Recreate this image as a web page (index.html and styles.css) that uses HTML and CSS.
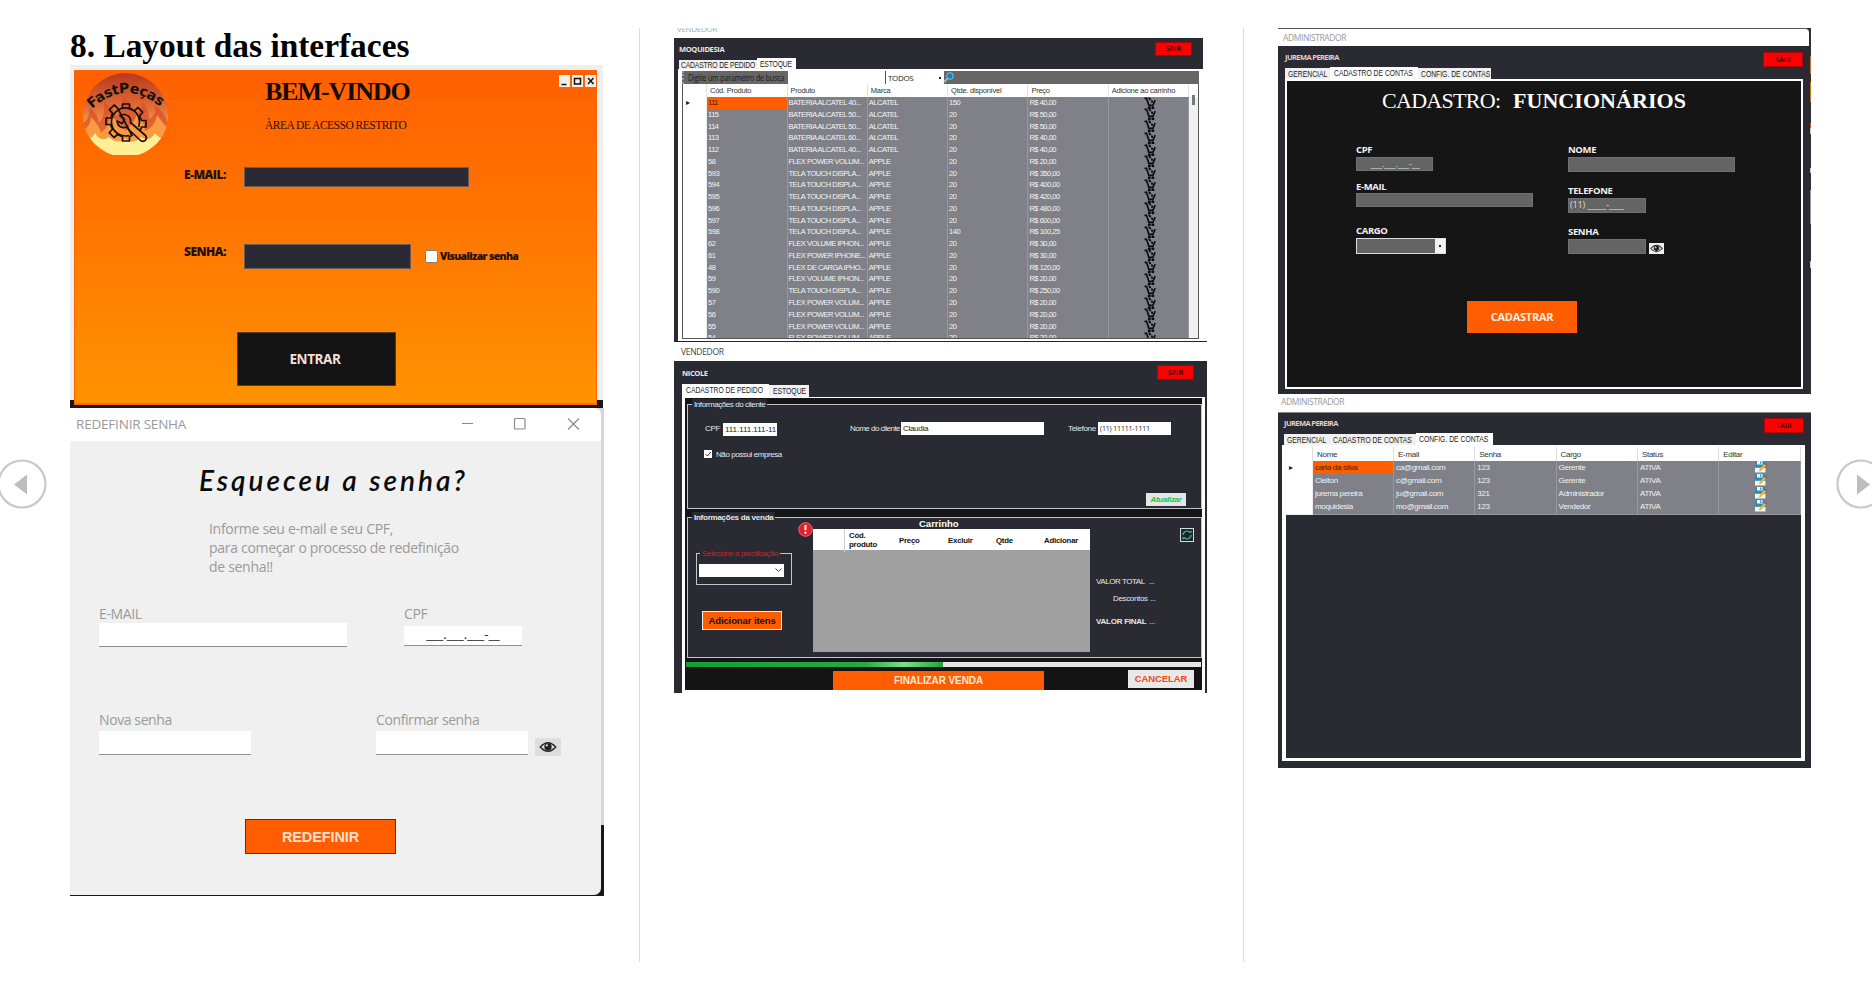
FILE: index.html
```html
<!DOCTYPE html>
<html lang="pt-BR">
<head>
<meta charset="utf-8">
<title>Layout das interfaces</title>
<link rel="stylesheet" href="styles.css">
</head>
<body>
<svg class="defs" width="0" height="0">
  <symbol id="cart" viewBox="0 0 12 13"><path d="M.3 1.4H2.400L4.800 8.700H9L11.400 3.200" fill="none" stroke="#0a0a0c" stroke-width="1.700"/><path d="M4 0l2.500 1 .8 2-2 .4zM7 3.400l2 .5.4 2-2 .2z" fill="#0a0a0c"/><circle cx="5.300" cy="11.300" r="1.600" fill="#0a0a0c"/><circle cx="9" cy="11.300" r="1.600" fill="#0a0a0c"/></symbol>
  <symbol id="eye" viewBox="0 0 20 14"><path d="M1 7Q10-3 19 7Q10 17 1 7Z" fill="none" stroke="#222" stroke-width="1.6"/><circle cx="10" cy="6.8" r="4.3" fill="#222"/><circle cx="8.7" cy="5.2" r="1.3" fill="#ddd"/></symbol>
  <symbol id="edit" viewBox="0 0 12 12"><path d="M0 0H9L10.500 2V11.500H0Z" fill="#2d8cb8"/><path d="M2 0H7.500V3.500H2Z" fill="#f4f8fa"/><path d="M5 .5H6.300V2.800H5Z" fill="#2d8cb8"/><path d="M0 6.800H10.500V11.500H0Z" fill="#f4f4f0"/><path d="M4.600 8.200l-.6 2.400 2.300-.8L11 4.400 9.200 2.800Z" fill="#edb63c"/><path d="M9.200 2.800l.9-1L12 3.400 11 4.400Z" fill="#c8402c"/></symbol>
</svg>
<main class="page">
  <section class="slide">
    <h1 class="heading">8. Layout das interfaces</h1>

    <div class="login-shot">
      <div class="login">
        <header class="login-head">
          <svg class="logo" width="85" height="82" viewBox="0 0 85 82">
            <defs>
              <linearGradient id="sky" x1="0" y1="0" x2="0" y2="1"><stop offset="0" stop-color="#b8381d"/><stop offset=".4" stop-color="#e06a36"/><stop offset=".7" stop-color="#f9a94e"/><stop offset="1" stop-color="#fff6a0"/></linearGradient>
              <clipPath id="disc"><path d="M0 42.500A42.500 42.500 0 0 1 85 42.500C85 62 72 76 55 82H30C13 76 0 62 0 42.500Z"/></clipPath>
              <path id="arc" d="M9 36Q43 4 80 36"/>
            </defs>
            <g clip-path="url(#disc)">
              <rect width="85" height="82" fill="url(#sky)"/>
              <path d="M0 50Q8 46 6 34Q15 40 16 50Q24 40 20 28Q32 36 33 44Q42 32 39 22Q50 32 52 42Q60 36 58 28Q66 34 66 46Q74 42 72 32Q82 40 85 50V82H0Z" fill="#dc4f2a" opacity=".75"/>
              <path d="M0 58Q8 52 8 44Q16 52 18 60Q28 52 26 42Q38 50 42 58Q52 50 54 40Q62 50 62 58Q72 54 74 42Q80 50 85 56V82H0Z" fill="#fa9a42"/>
              <path d="M0 66Q8 68 12 60Q18 70 26 64Q34 72 42 66Q50 72 58 64Q66 70 72 60Q78 68 85 64V82H0Z" fill="#ffef95"/>
            </g>
            <text class="logo-text"><textPath href="#arc" textLength="76">FastPeças</textPath></text>
            <g fill="none" stroke="#17110d" stroke-width="1.700" stroke-linejoin="round">
              <path d="M39.500 35.500V31h7v4.500l5 2.200 3.500-3.200 4.800 4.800-3.300 3.600 2 4.600H63v6.500h-4.500l-1 3M49 62.500l-2.500 1V68h-7v-4.300l-5-2.200-3.500 3-4.800-4.800 3.200-3.500-2-4.700H23v-6.500h4.500l2-4.700-3.200-3.500 4.800-4.800 3.500 3.200z"/>
              <path d="M55.500 54A14 14 0 1 0 46 62.500"/>
              <path d="M37 42.500l4.500 4-2.500 4-5-2.500c1 6 5 7.500 9 6l14.500 13.500c4 2.500 7.500-1.500 5-5L47.500 49.500c1-5.500-4-10-10.500-7z"/>
            </g>
          </svg>
          <div class="login-title">
            <h2>BEM-VINDO</h2>
            <p>ÀREA DE ACESSO RESTRITO</p>
          </div>
          <div class="classic-buttons">
            <svg viewBox="0 0 11 12"><path d="M2.500 9.500h5" /></svg>
            <svg viewBox="0 0 11 12"><path d="M2.500 3.500h6v5.500h-6z"/></svg>
            <svg viewBox="0 0 11 12"><path d="M3 3l5.500 6M8.500 3l-5.500 6"/></svg>
          </div>
        </header>
        <div class="login-row">
          <b>E-MAIL:</b><i class="dark-input"></i>
        </div>
        <div class="login-row login-row-pass">
          <b>SENHA:</b><i class="dark-input"></i><i class="box"></i><b class="small">Visualizar senha</b>
        </div>
        <div class="login-button">ENTRAR</div>
      </div>
    </div>

    <div class="reset-shot">
      <div class="reset">
        <header class="reset-bar">
          <span>REDEFINIR SENHA</span>
          <svg width="120" height="14" viewBox="0 0 120 14" fill="none" stroke="#8a8a8a" stroke-width="1.200"><path d="M1 6.500h11"/><rect x="53.500" y="1.500" width="10.500" height="10.500" rx="1"/><path d="M107 1.500l11 11M118 1.500l-11 11"/></svg>
        </header>
        <h2 class="script">Esqueceu a senha?</h2>
        <p class="reset-text">Informe seu e-mail e seu CPF,<br>para começar o processo de redefinição<br>de senha!!</p>
        <div class="reset-row reset-top">
          <label>E-MAIL<i class="white-input"></i></label>
          <label class="cpf">CPF<i class="white-input">___.___.___-__</i></label>
        </div>
        <div class="reset-row reset-bottom">
          <label>Nova senha<i class="white-input"></i></label>
          <label>Confirmar senha<i class="white-input"></i></label>
          <span class="eye-btn"><svg width="18" height="12"><use href="#eye"/></svg></span>
        </div>
        <div class="reset-button">REDEFINIR</div>
      </div>
    </div>
  </section>

  <section class="slide">
    <div class="cut-title"><span>VENDEDOR</span></div>
    <div class="stock">
      <header class="app-head stock-head"><b>MOQUIDESIA</b><span class="exit">SAIR</span></header>
      <nav class="tabs stock-tabs"><span><em>CADASTRO DE PEDIDO</em></span><span class="on"><em>ESTOQUE</em></span></nav>
      <div class="stock-panel">
        <div class="search"><span><em>Digite um parametro de busca</em></span><i></i><span class="all">TODOS<u></u></span>
          <svg width="12" height="11" viewBox="0 0 12 11"><path d="M1 10l4-4" stroke="#a3b7c2" stroke-width="2"/><circle cx="7" cy="4" r="3.300" fill="#1c7fb8" stroke="#79c9ea"/></svg></div>
        <div class="stock-table">
          <div class="tr th"><span></span><span>Cód. Produto</span><span>Produto</span><span>Marca</span><span>Qtde. disponível</span><span>Preço</span><span>Adicione ao carrinho</span></div>
          <div class="tr sel"><span>▸</span><span>111</span><span>BATERIA ALCATEL 40...</span><span>ALCATEL</span><span>150</span><span>R$ 40,00</span><span><svg><use href="#cart"/></svg></span></div>
          <div class="tr"><span></span><span>115</span><span>BATERIA ALCATEL 50...</span><span>ALCATEL</span><span>20</span><span>R$ 50,00</span><span><svg><use href="#cart"/></svg></span></div>
          <div class="tr"><span></span><span>114</span><span>BATERIA ALCATEL 50...</span><span>ALCATEL</span><span>20</span><span>R$ 50,00</span><span><svg><use href="#cart"/></svg></span></div>
          <div class="tr"><span></span><span>113</span><span>BATERIA ALCATEL 60...</span><span>ALCATEL</span><span>20</span><span>R$ 40,00</span><span><svg><use href="#cart"/></svg></span></div>
          <div class="tr"><span></span><span>112</span><span>BATERIA ALCATEL 40...</span><span>ALCATEL</span><span>20</span><span>R$ 40,00</span><span><svg><use href="#cart"/></svg></span></div>
          <div class="tr"><span></span><span>58</span><span>FLEX POWER VOLUM...</span><span>APPLE</span><span>20</span><span>R$ 20,00</span><span><svg><use href="#cart"/></svg></span></div>
          <div class="tr"><span></span><span>593</span><span>TELA TOUCH DISPLA...</span><span>APPLE</span><span>20</span><span>R$ 350,00</span><span><svg><use href="#cart"/></svg></span></div>
          <div class="tr"><span></span><span>594</span><span>TELA TOUCH DISPLA...</span><span>APPLE</span><span>20</span><span>R$ 400,00</span><span><svg><use href="#cart"/></svg></span></div>
          <div class="tr"><span></span><span>595</span><span>TELA TOUCH DISPLA...</span><span>APPLE</span><span>20</span><span>R$ 420,00</span><span><svg><use href="#cart"/></svg></span></div>
          <div class="tr"><span></span><span>596</span><span>TELA TOUCH DISPLA...</span><span>APPLE</span><span>20</span><span>R$ 480,00</span><span><svg><use href="#cart"/></svg></span></div>
          <div class="tr"><span></span><span>597</span><span>TELA TOUCH DISPLA...</span><span>APPLE</span><span>20</span><span>R$ 600,00</span><span><svg><use href="#cart"/></svg></span></div>
          <div class="tr"><span></span><span>598</span><span>TELA TOUCH DISPLA...</span><span>APPLE</span><span>140</span><span>R$ 100,25</span><span><svg><use href="#cart"/></svg></span></div>
          <div class="tr"><span></span><span>62</span><span>FLEX VOLUME IPHON...</span><span>APPLE</span><span>20</span><span>R$ 30,00</span><span><svg><use href="#cart"/></svg></span></div>
          <div class="tr"><span></span><span>61</span><span>FLEX POWER IPHONE...</span><span>APPLE</span><span>20</span><span>R$ 30,00</span><span><svg><use href="#cart"/></svg></span></div>
          <div class="tr"><span></span><span>48</span><span>FLEX DE CARGA IPHO...</span><span>APPLE</span><span>20</span><span>R$ 120,00</span><span><svg><use href="#cart"/></svg></span></div>
          <div class="tr"><span></span><span>59</span><span>FLEX VOLUME IPHON...</span><span>APPLE</span><span>20</span><span>R$ 20,00</span><span><svg><use href="#cart"/></svg></span></div>
          <div class="tr"><span></span><span>590</span><span>TELA TOUCH DISPLA...</span><span>APPLE</span><span>20</span><span>R$ 250,00</span><span><svg><use href="#cart"/></svg></span></div>
          <div class="tr"><span></span><span>57</span><span>FLEX POWER VOLUM...</span><span>APPLE</span><span>20</span><span>R$ 20,00</span><span><svg><use href="#cart"/></svg></span></div>
          <div class="tr"><span></span><span>56</span><span>FLEX POWER VOLUM...</span><span>APPLE</span><span>20</span><span>R$ 20,00</span><span><svg><use href="#cart"/></svg></span></div>
          <div class="tr"><span></span><span>55</span><span>FLEX POWER VOLUM...</span><span>APPLE</span><span>20</span><span>R$ 20,00</span><span><svg><use href="#cart"/></svg></span></div>
          <div class="tr"><span></span><span>54</span><span>FLEX POWER VOLUM...</span><span>APPLE</span><span>20</span><span>R$ 20,00</span><span><svg><use href="#cart"/></svg></span></div>
          <i class="thumb"></i>
        </div>
      </div>
    </div>

    <div class="order-title">VENDEDOR</div>
    <div class="order">
      <header class="app-head order-head"><b>NICOLE</b><span class="exit">SAIR</span></header>
      <nav class="tabs order-tabs"><span class="on"><em>CADASTRO DE PEDIDO</em></span><span><em>ESTOQUE</em></span></nav>
      <div class="order-panel">
        <div class="group client">
          <span class="legend">Informações do cliente</span>
          <div class="client-row"><span>CPF</span><i class="cpf-v">111.111.111-11</i><span class="name-l">Nome do cliente</span><i class="name-v">Claudia</i><span class="tel-l">Telefone</span><i class="tel-v">(11) 11111-1111</i></div>
          <div class="client-check"><svg width="8" height="8" viewBox="0 0 8 8"><rect width="8" height="8" fill="#fff"/><path d="M1.500 4l2 2L6.700 2" fill="none" stroke="#333"/></svg><span>Não possui empresa</span></div>
          <div class="update">Atualizar</div>
        </div>
        <div class="group sale">
          <span class="legend strong">Informações da venda</span>
          <div class="sale-grid">
            <div class="sale-left">
              <div class="price-group"><span class="legend red">Selecione a precificação</span><i class="price-select"><svg width="7" height="5" viewBox="0 0 7 5"><path d="M.5.500l3 3 3-3" fill="none" stroke="#444"/></svg></i></div>
              <div class="add-items">Adicionar itens</div>
            </div>
            <div class="basket">
              <svg class="alert" width="15" height="15" viewBox="0 0 15 15"><circle cx="7.500" cy="7.500" r="6.800" fill="#e0202c" stroke="#f06a70"/><path d="M7.500 3v5.300M7.500 9.800v2" stroke="#fff" stroke-width="1.900"/></svg>
              <b class="basket-title">Carrinho</b>
              <div class="basket-head"><span></span><span>Cód.<br>produto</span><span>Preço</span><span>Excluir</span><span>Qtde</span><span>Adicionar</span></div>
              <div class="basket-body"></div>
            </div>
            <div class="totals">
              <svg class="refresh" width="14" height="14" viewBox="0 0 14 14"><rect x=".5" y=".5" width="13" height="13" fill="#1c2529" stroke="#d5dcdc"/><path d="M3 7a4 4 0 0 1 7-2.500M11 7a4 4 0 0 1-7 2.500" fill="none" stroke="#39a88c" stroke-width="1.400"/><path d="M8.500 5h3V2zM5.500 9h-3v3z" fill="#39a88c"/></svg>
              <p><span>VALOR TOTAL</span><span>...</span></p>
              <p class="disc"><span>Descontos</span><span>...</span></p>
              <p class="final"><b>VALOR FINAL</b><span>...</span></p>
            </div>
          </div>
        </div>
        <div class="progress"><i></i></div>
        <footer class="order-foot"><span class="finish">FINALIZAR VENDA</span><span class="cancel">CANCELAR</span></footer>
      </div>
    </div>
  </section>

  <section class="slide last">
    <div class="register-shot">
      <div class="admin-title">ADMINISTRADOR</div>
      <header class="app-head reg-head"><b>JUREMA PEREIRA</b><span class="exit">SAIR</span></header>
      <nav class="tabs reg-tabs"><span><em>GERENCIAL</em></span><span class="on"><em>CADASTRO DE CONTAS</em></span><span><em>CONFIG. DE CONTAS</em></span></nav>
      <div class="reg-panel">
        <h2 class="reg-title"><span>CADASTRO:</span><b>FUNCIONÁRIOS</b></h2>
        <div class="reg-form">
          <div class="reg-left">
            <label>CPF</label><i class="gray w77 center">___.___.___-__</i>
            <label class="l-mail">E-MAIL</label><i class="gray w177"></i>
            <label class="l-cargo">CARGO</label><i class="combo"><u></u></i>
          </div>
          <div class="reg-right">
            <label>NOME</label><i class="gray w167"></i>
            <label class="l-tel">TELEFONE</label><i class="gray w78">(11) _____-____</i>
            <label class="l-pass">SENHA</label><div class="pass"><i class="gray w78"></i><span class="eye-mini"><svg width="13" height="9"><use href="#eye"/></svg></span></div>
          </div>
        </div>
        <div class="reg-button">CADASTRAR</div>
      </div>
      <i class="fringe"></i>
    </div>

    <div class="admin-title list-title">ADMINISTRADOR</div>
    <div class="accounts">
      <header class="app-head acc-head"><b>JUREMA PEREIRA</b><span class="exit">SAIR</span></header>
      <nav class="tabs acc-tabs"><span><em>GERENCIAL</em></span><span><em>CADASTRO DE CONTAS</em></span><span class="on"><em>CONFIG. DE CONTAS</em></span></nav>
      <div class="acc-panel">
        <div class="ar ah"><span></span><span>Nome</span><span>E-mail</span><span>Senha</span><span>Cargo</span><span>Status</span><span>Editar</span></div>
        <div class="ar sel"><span>▸</span><span>carla da silva</span><span>ca@gmail.com</span><span>123</span><span>Gerente</span><span>ATIVA</span><span><svg><use href="#edit"/></svg></span></div>
        <div class="ar"><span></span><span>Cleiton</span><span>c@gmail.com</span><span>123</span><span>Gerente</span><span>ATIVA</span><span><svg><use href="#edit"/></svg></span></div>
        <div class="ar"><span></span><span>jurema pereira</span><span>ju@gmail.com</span><span>321</span><span>Administrador</span><span>ATIVA</span><span><svg><use href="#edit"/></svg></span></div>
        <div class="ar"><span></span><span>moquidesia</span><span>mo@gmail.com</span><span>123</span><span>Vendedor</span><span>ATIVA</span><span><svg><use href="#edit"/></svg></span></div>
      </div>
    </div>
  </section>

  <svg class="arrow prev" width="50" height="50" viewBox="0 0 50 50"><circle cx="25" cy="25" r="23.500" fill="#fff" stroke="#c8c8c8" stroke-width="2.200"/><path d="M17 25.500L30 15.500V35.500Z" fill="#bdbdbd"/></svg>
  <svg class="arrow next" width="50" height="50" viewBox="0 0 50 50"><circle cx="25" cy="25" r="23.500" fill="#fff" stroke="#c8c8c8" stroke-width="2.200"/><path d="M34 25.500L21 15.500V35.500Z" fill="#bdbdbd"/></svg>
</main>
</body>
</html>
```
FILE: styles.css
```css
* { box-sizing: border-box; }
body { margin: 0; background: #fff; font-family: "Liberation Sans", Arial, sans-serif; }
h1, h2, p { margin: 0; font-weight: normal; }
i, em, u { font-style: normal; text-decoration: none; }
i, svg { display: block; }
.defs { position: absolute; }

.page { position: relative; width: 1872px; height: 982px; overflow: hidden; display: grid; grid-template-columns: 640px 604px 628px; white-space: nowrap; }
.slide { margin-top: 28px; height: 934px; padding-left: 34px; border-right: 1px solid #dcdcdc; }
.slide:first-child { padding-left: 70px; }
.slide.last { border: 0; }
.arrow { position: absolute; top: 459px; }
.prev { left: -3px; }
.next { left: 1836px; }

.heading { height: 37px; font: bold 33.4px/36px "Liberation Serif", serif; color: #000; }

/* login window */
.login-shot { width: 533px; height: 343px; padding: 5px 6px 3px 4px; background: linear-gradient(#efefef 335px, #18181c 335px); }
.login { height: 335px; border: 1px solid #ff6500; border-bottom-width: 2px; background: linear-gradient(#ff6000, #ff7800 50%, #ff9300); color: #24100a; }
.login-head { height: 96px; padding-left: 8px; display: grid; grid-template-columns: 182px 294px 37px; }
.logo { margin-top: 2px; overflow: visible; }
.logo-text { font: bold 14px "DejaVu Sans", sans-serif; fill: #17110d; }
.login-title { padding-top: 6px; font-family: "Liberation Serif", serif; }
.login-title h2 { font-size: 26px; font-weight: bold; line-height: 30px; letter-spacing: -1.1px; color: #150b08; }
.login-title p { margin-top: 10px; font-size: 11.5px; line-height: 16px; letter-spacing: -.5px; color: #2c1005; }
.classic-buttons { display: flex; gap: 2px; padding-top: 4px; }
.classic-buttons svg { width: 11px; height: 12px; background: #f2efe9; stroke: #111; stroke-width: 1.5; fill: none; }
.login-row { display: grid; grid-template-columns: 60px 225px; padding-left: 109px; height: 20px; font: bold 12px/16px "Open Sans", sans-serif; letter-spacing: -.5px; }
.dark-input { background: #292a33; border: 1px solid #6d5a50; }
.login-row-pass { margin-top: 57px; height: 21px; grid-template-columns: 60px 181px 15px 90px; }
.login-row-pass .dark-input { width: 167px; }
.box { width: 13px; height: 13px; margin-top: 6px; border: 1px solid #8c7d74; border-radius: 2px; background: #fff; }
.small { font-size: 10.5px; line-height: 25px; letter-spacing: -.65px; }
.login-button { width: 159px; height: 54px; margin: 67px 0 0 162px; background: #141414; border: 1px solid #5d3a0c; color: #f7ded2; text-align: center; font: bold 13.5px/53px "Open Sans", sans-serif; letter-spacing: -.4px; padding-right: 3px; }

/* password reset window */
.reset-shot { width: 534px; height: 488px; background: linear-gradient(#d6d6d6 417px, #18181c 417px); padding-right: 3px; }
.reset { height: 487px; background: #f0f0f0; border-radius: 0 7px 7px 0; overflow: hidden; font-family: "Open Sans", sans-serif; color: #9a9a9a; }
.reset-bar { height: 33px; background: #fff; padding: 9px 0 0 6px; display: grid; grid-template-columns: 385px 120px; font-size: 13.5px; line-height: 15px; letter-spacing: -.2px; }
.script { margin: 25px 0 0 129px; height: 31px; font: italic 600 28px/29px "Lato", sans-serif; letter-spacing: 3px; color: #0a0a0a; }
.reset-text { margin: 22px 0 0 139px; font-size: 14px; line-height: 19px; letter-spacing: -.3px; }
.reset-row { display: grid; font-size: 14px; line-height: 16px; letter-spacing: -.4px; padding-left: 29px; }
.reset-top { margin-top: 30px; grid-template-columns: 305px 118px; }
.white-input { height: 24px; background: #fff; border-bottom: 1.5px solid #8f8f8f; color: #222; }
.reset-top .white-input { width: 248px; margin-top: 1px; }
.reset-top .cpf .white-input { width: 118px; height: 20px; margin-top: 4px; text-align: center; font-size: 13px; line-height: 17px; letter-spacing: 0; }
.reset-bottom { margin-top: 65px; grid-template-columns: 277px 159px 26px; }
.reset-bottom .white-input { width: 152px; margin-top: 3px; }
.eye-btn { width: 26px; height: 18px; margin-top: 26px; background: #dedede; padding: 3px 4px; }
.reset-button { width: 151px; height: 35px; margin: 63px 0 0 175px; background: #ff5d00; border: 1px solid #6c2c08; color: #ffe0cc; text-align: center; font: bold 14.5px/34px "Liberation Sans", sans-serif; letter-spacing: -.1px; }

/* shared window parts */
.app-head { display: grid; color: #f3e6e0; font-size: 7.5px; }
.app-head b { font-family: "Open Sans", sans-serif; letter-spacing: -.35px; }
.exit { background: #f00; border: 1px solid #b00008; color: #5a0000; text-align: center; font: bold 7px "Open Sans", sans-serif; }
.tabs { display: flex; align-items: flex-end; font-size: 8.6px; color: #222; }
.tabs span { background: #f0f0f0; height: 11px; line-height: 12px; }
.tabs span.on { background: #fff; height: 12px; }
.tabs em { display: block; width: 0; transform: scaleX(.79); transform-origin: left; }

/* stock window */
.cut-title { height: 10px; overflow: hidden; padding-left: 3px; }
.cut-title span { display: block; margin-top: -4px; font: 8px/10px "Open Sans", sans-serif; letter-spacing: -.3px; color: #aaa; clip-path: inset(4px 0 0 0); }
.stock { width: 529px; height: 303px; background: #292a32; }
.stock-head { height: 20px; grid-template-columns: 476px 37px; padding: 3.5px 0 0 5px; line-height: 15px; }
.stock-head .exit { height: 14px; line-height: 12px; }
.stock-tabs { padding-left: 5px; height: 11px; letter-spacing: -.2px; }
.stock-tabs span:nth-child(1) { width: 78px; height: 9px; line-height: 10px; padding-left: 2px; }
.stock-tabs span:nth-child(2) { width: 39px; height: 11px; padding-left: 3px; }
.stock-panel { margin-left: 4px; height: 272px; background: #fff; padding: 2px 4px 2px 4px; }
.search { height: 13px; background: #666; display: grid; grid-template-columns: 104px 97px 59px 20px; font: 9px/14px "Open Sans", sans-serif; letter-spacing: -.2px; color: #1b1b1b; border-left: 2px dotted #999; }
.search > span:first-child { padding-left: 4px; }
.search em { display: block; width: 0; transform: scaleX(.79); transform-origin: left; }
.search i { background: #fff; }
.search .all { background: #fff; border-left: 1px solid #555; padding-left: 2px; font-size: 8px; display: flex; align-items: center; justify-content: space-between; letter-spacing: -.35px; }
.all u { width: 2px; height: 2px; margin-right: 3px; background: #222; }
.search svg { margin: 1px 0 0 -1px; }
.stock-table { position: relative; height: 255px; overflow: hidden; border: 1px solid #555; border-top: 0; background: #f0f0f0; font-size: 7.5px; letter-spacing: -.47px; }
.tr { display: grid; grid-template-columns: 24px 80.5px 80.3px 80.3px 80.3px 80.3px 80.3px; width: 506px; height: 11.77px; line-height: 12.5px; color: #f4f4f4; }
.tr span { background: #808188; border-right: 1px solid #98999e; border-bottom: 1px solid #96979c; padding-left: 1px; }
.tr span:first-child { background: #fff; color: #222; border-color: #eee; padding-left: 3px; }
.tr.sel span:nth-child(2) { background: #ff5d00; color: #501c00; }
.tr.th { height: 13px; width: 516px; background: #fff; line-height: 14px; letter-spacing: -.25px; color: #333; }
.tr.th span { background: #fff; border-color: #e2e2e2; border-bottom-color: #ccc; padding-left: 3px; }
.tr svg { width: 12px; height: 12.5px; margin: -.5px 0 0 34px; }
.thumb { position: absolute; right: 3px; top: 11px; width: 3px; height: 10px; background: #777; }

/* order window */
.order-title { width: 533px; height: 20px; border-top: 1px solid #222; background: #fff; padding-left: 7px; font: 8.5px/19px "Open Sans", sans-serif; letter-spacing: -.3px; color: #444; }
.order { width: 533px; height: 332px; background: #292a32; padding-left: 8px; padding-top: 3px; }
.order-head { height: 20px; grid-template-columns: 475px 37px; line-height: 16px; padding: 1px 0 1px; }
.order-head .exit { height: 15px; line-height: 13px; }
.order-tabs { height: 13px; }
.order-tabs span:nth-child(1) { width: 87px; height: 13px; line-height: 13px; padding-left: 4px; }
.order-tabs span:nth-child(2) { width: 40px; height: 12px; padding-left: 4px; line-height: 13px; }
.order-panel { width: 523px; height: 296px; border: solid #fff; border-width: 1px 3px 3px; background: #151518; padding: 2px 0 0; font-size: 8px; letter-spacing: -.3px; color: #e8e8e8; }
.group { position: relative; width: 515px; margin-left: 2px; border: 1px solid #c4c4c8; background: #292a32; }
.legend { position: absolute; top: -6px; left: 4px; padding: 0 2px; line-height: 11px; background: #292a32; letter-spacing: -.42px; }
.legend.strong { font-weight: bold; letter-spacing: -.25px; }
.client { height: 105px; margin-top: 4px; padding-top: 17px; }
.client-row { display: grid; grid-template-columns: 18px 127px 51px 167px 30px 73px; padding-left: 17px; height: 15px; line-height: 14px; }
.client-row i { background: #fff; height: 13px; padding-left: 2px; color: #222; line-height: 13px; }
.client-row .cpf-v { width: 54px; margin-top: 1px; letter-spacing: -.05px; }
.client-row .name-v { width: 143px; }
.client-row .tel-v { font-size: 7px; font-family: "Open Sans", sans-serif; letter-spacing: -.15px; }
.client-row .name-l { letter-spacing: -.52px; }
.client-check { display: flex; gap: 4px; padding-left: 16px; margin-top: 13px; line-height: 10px; letter-spacing: -.42px; }
.update { width: 40px; height: 13px; margin: 33px 0 0 458px; background: #e6e6e6; color: #22c33a; text-align: center; font-style: italic; font-weight: bold; line-height: 13px; }
.sale { height: 141px; margin-top: 8px; }
.sale-grid { display: grid; grid-template-columns: 125px 277px 110px; }
.sale-left { padding: 35px 0 0 8px; }
.price-group { position: relative; width: 96px; height: 32px; border: 1px solid #c4c4c8; padding: 10px 0 0 2px; }
.legend.red { color: #d81c28; left: 3px; letter-spacing: -.45px; }
.price-select { width: 85px; height: 13px; background: #fff; padding: 4px 0 0 76px; }
.add-items { width: 80px; height: 19px; margin: 26px 0 0 6px; background: #ff5d00; border: 1.5px solid #eee; color: #1b0d05; font-weight: bold; font-size: 9.5px; line-height: 17px; letter-spacing: -.1px; text-align: center; }
.basket { position: relative; }
.alert { position: absolute; left: -15px; top: 4px; }
.basket-title { display: block; height: 11px; padding-left: 106px; line-height: 12px; font-size: 9.5px; letter-spacing: 0; color: #fff; }
.basket-head { display: grid; grid-template-columns: 32px 50px 49px 48px 49px 49px; height: 21px; background: #fff; font-weight: bold; color: #111; font-size: 7.8px; line-height: 23px; letter-spacing: -.2px; }
.basket-head span:first-child { border-right: 1px solid #ccc; }
.basket-head span:nth-child(2) { line-height: 9px; padding: 2px 0 0 4px; }
.basket-head span:nth-child(3), .basket-head span:nth-child(4), .basket-head span:nth-child(5) { padding-left: 4px; }
.basket-head span:nth-child(6) { padding-left: 3px; }
.basket-body { height: 102px; background: #a0a0a0; }
.totals { padding: 10px 0 0 6px; }
.refresh { margin-left: 84px; }
.totals p { display: grid; grid-template-columns: 53px 20px; line-height: 10px; margin-top: 35px; letter-spacing: -.45px; }
.totals .disc { margin-top: 7px; padding-left: 17px; grid-template-columns: 37px 20px; letter-spacing: -.35px; }
.totals .final { margin-top: 13px; grid-template-columns: 53px 20px; letter-spacing: -.25px; }
.progress { height: 5px; margin: 4px 0 0 1px; width: 515px; background: #e6e6e6; }
.progress i { width: 257px; height: 5px; background: linear-gradient(90deg, #12a035, #25ab45 70%, #7fe08b 85%, #1ba63b); }
.order-foot { display: grid; grid-template-columns: 295px 66px; padding-left: 148px; height: 23px; background: #141414; }
.finish { width: 211px; height: 19px; margin-top: 4px; background: #ff5d00; color: #ffe9dc; font-weight: bold; font-size: 10px; line-height: 20px; text-align: center; letter-spacing: -.1px; }
.cancel { height: 18px; margin-top: 3px; background: #e8e8e8; color: #f04a18; font-weight: bold; font-size: 9.5px; line-height: 18px; text-align: center; letter-spacing: -.1px; }

/* account registration window */
.register-shot { position: relative; width: 533px; height: 366px; background: #292a32; }
.admin-title { width: 531px; height: 18px; background: #fff; border-top: 1px solid #555; border-radius: 0 4px 0 0; padding-left: 5px; font: 8.5px/18px "Open Sans", sans-serif; letter-spacing: -.4px; color: #999; }
.reg-head { height: 21px; grid-template-columns: 478px 40px; padding: 6px 0 0 7px; line-height: 10px; color: #e8cfc4; }
.reg-head b, .acc-head b { letter-spacing: -.6px; }
.reg-head .exit { height: 15px; line-height: 13px; }
.reg-tabs { padding-left: 7px; height: 12px; }
.reg-tabs span { padding-left: 3px; width: 73px; }
.reg-tabs span:nth-child(1), .acc-tabs span:nth-child(1) { width: 45px; }
.reg-tabs span:nth-child(2) { width: 88px; padding-left: 4px; }
.reg-panel { width: 518px; height: 310px; margin-left: 7px; border: 2px solid #fff; background: #151515; font-family: "Open Sans", sans-serif; }
.reg-title { display: grid; grid-template-columns: 131px 180px; padding: 8px 0 0 95px; font: 22px/24px "Liberation Serif", serif; letter-spacing: -.7px; color: #fff; }
.reg-title b { letter-spacing: .05px; }
.reg-form { display: grid; grid-template-columns: 212px 200px; padding-left: 69px; margin-top: 31px; height: 122px; }
.reg-form label { display: block; font-size: 9.5px; font-weight: bold; line-height: 12px; height: 13px; letter-spacing: -.35px; color: #f2f2f2; }
.gray { height: 14px; background: #646464; border: 1px solid #707070; color: #ddd; font-size: 9px; line-height: 11px; padding-left: 1px; }
.center { text-align: center; letter-spacing: -.15px; }
.w77 { width: 77px; } .w78 { width: 78px; } .w167 { width: 167px; } .w177 { width: 177px; }
.reg-right .gray { height: 15px; }
.reg-form .l-mail { margin-top: 10px; height: 12px; }
.reg-form .l-cargo { margin-top: 18px; }
.reg-form .l-tel { margin-top: 13px; height: 13px; }
.reg-form .l-pass { margin-top: 13px; height: 13px; }
.reg-right .w78 { font-size: 9px; letter-spacing: -.15px; }
.combo { width: 90px; height: 16px; background: #646464; border: 1px solid #ddd; padding-left: 78px; }
.combo u { display: block; height: 14px; background: radial-gradient(circle, #222 1px, #f2f2f2 1.5px); }
.pass { display: flex; gap: 3px; }
.eye-mini { width: 15px; height: 11px; margin-top: 4px; background: #eee; padding: 1px; }
.reg-button { width: 110px; height: 32px; margin: 35px 0 0 180px; background: #ff5d00; color: #ffece0; text-align: center; font-weight: bold; font-size: 11px; line-height: 32px; letter-spacing: -.25px; }
.fringe { position: absolute; right: 0; top: 0; width: 1px; height: 366px; background: linear-gradient(#333 28px, #c67522 28px 46px, #333 46px 54px, #c67522 54px 74px, #333 74px 95px, #c85a20 95px 100px, #ccc 100px 106px, #333 106px 140px, #ccc 140px 145px, #333 145px 162px, #999 162px 196px, #333 196px 233px, #ccc 233px 240px, #333 240px); }

/* account list window */
.list-title { border: 0; padding-left: 3px; line-height: 16px; }
.accounts { width: 533px; height: 356px; background: #292a32; border-top: 1px solid #888; }
.acc-head { height: 20px; grid-template-columns: 480px 40px; padding: 5px 0 0 6px; line-height: 11px; color: #e8cfc4; }
.acc-head .exit { height: 15px; line-height: 13px; }
.acc-tabs { padding-left: 6px; height: 12px; }
.acc-tabs span { padding-left: 3px; }
.acc-tabs span:nth-child(2) { width: 87px; padding-left: 4px; }
.acc-tabs span:nth-child(3) { width: 77px; padding-left: 3px; }
.acc-panel { width: 523px; height: 316px; margin-left: 4px; border: solid #fff; border-width: 2px 4px 3px; background: #292a32; font-size: 8px; letter-spacing: -.3px; }
.ar { display: grid; grid-template-columns: 27px 81px 81.3px 81.3px 81.4px 81.3px 82px; height: 13px; line-height: 13.5px; color: #f2f2f2; }
.ar span { background: #808188; border-right: 1px solid #98999e; border-bottom: 1px solid #96979c; padding-left: 2px; }
.ar span:first-child { background: #fff; color: #222; border-color: #eee; padding-left: 3px; }
.ar.sel span:nth-child(2) { background: #ff5d00; color: #501c00; }
.ar.ah { color: #333; height: 14px; line-height: 15px; }
.ar.ah span { background: #fff; border-color: #ddd; padding-left: 4px; }
.ar svg { width: 12px; height: 12px; margin-left: 34px; }
```
